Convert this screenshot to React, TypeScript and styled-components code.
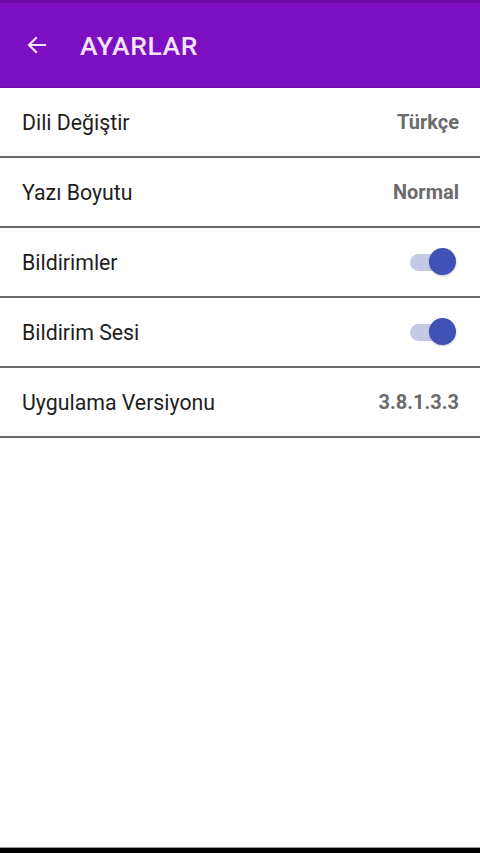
import styled, { createGlobalStyle } from "styled-components";

interface SettingRow {
  label: string;
  value?: string;
  toggle?: boolean;
}

const rows: SettingRow[] = [
  { label: "Dili Değiştir", value: "Türkçe" },
  { label: "Yazı Boyutu", value: "Normal" },
  { label: "Bildirimler", toggle: true },
  { label: "Bildirim Sesi", toggle: true },
  { label: "Uygulama Versiyonu", value: "3.8.1.3.3" },
];

function App() {
  return (
    <>
      <Global />
      <Screen>
        <Header>
          <BackButton>
            <svg width="24" height="24" viewBox="0 0 24 24">
              <path
                d="M20 12H5M11 5l-7 7 7 7"
                fill="none"
                stroke="#f6e3f7"
                strokeWidth="2.2"
                strokeLinecap="square"
              />
            </svg>
          </BackButton>
          <Title>AYARLAR</Title>
        </Header>
        <List>
          {rows.map((r) => (
            <Row key={r.label}>
              <Label>{r.label}</Label>
              {r.toggle ? (
                <Switch>
                  <Track />
                  <Thumb />
                </Switch>
              ) : (
                <Value>{r.value}</Value>
              )}
            </Row>
          ))}
        </List>
        <Spacer />
        <NavBar />
      </Screen>
    </>
  );
}

const Global = createGlobalStyle`
  html, body {
    margin: 0;
    padding: 0;
    background: #fff;
    font-family: Roboto, "Noto Sans", sans-serif;
  }
`;

const Screen = styled.div`
  width: 480px;
  height: 853px;
  display: flex;
  flex-direction: column;
  overflow: hidden;
`;

const Header = styled.div`
  height: 88px;
  background: #7b0fc1;
  border-top: 3px solid #6d0cab;
  border-bottom: 1px solid #6e0db0;
  box-sizing: border-box;
  display: flex;
  align-items: center;
  padding-left: 25px;
`;

const BackButton = styled.div`
  width: 24px;
  height: 24px;
  display: flex;
`;

const Title = styled.div`
  margin-left: 31px;
  color: #f6e3f7;
  font-size: 26.5px;
  font-weight: 500;
  letter-spacing: 0.6px;
`;

const List = styled.div`
  display: flex;
  flex-direction: column;
`;

const Row = styled.div`
  height: 70px;
  box-sizing: border-box;
  border-bottom: 2px solid #6a6a6a;
  display: flex;
  align-items: center;
  justify-content: space-between;
  padding: 0 21px 0 22px;
`;

const Label = styled.div`
  font-size: 21.3px;
  color: #1e1e1e;
`;

const Value = styled.div`
  font-size: 20px;
  font-weight: 700;
  color: #6b6b6b;
`;

const Switch = styled.div`
  position: relative;
  width: 46px;
  height: 28px;
  margin-right: 3px;
  display: flex;
  align-items: center;
`;

const Track = styled.div`
  width: 36px;
  height: 17px;
  border-radius: 9px;
  background: #c4c9e6;
`;

const Thumb = styled.div`
  position: absolute;
  right: 0;
  top: 0;
  width: 27px;
  height: 27px;
  border-radius: 50%;
  background: #3f51b5;
  box-shadow: 0 1px 2px rgba(0, 0, 0, 0.25);
`;

const Spacer = styled.div`
  flex: 1;
`;

const NavBar = styled.div`
  height: 5px;
  background: #000;
  border-top: 1px solid #9a9a9a;
`;

export default App;
